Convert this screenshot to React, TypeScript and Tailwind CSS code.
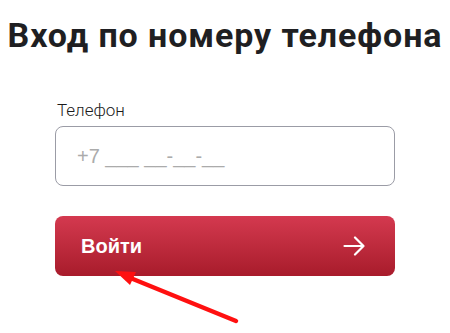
import React from 'react';

export default function App() {
  return (
    <div className="relative w-[450px] h-[333px] bg-white overflow-hidden">
      <h1 className="pt-[18px] text-center text-[34px] leading-[34px] tracking-[0.9px] font-bold text-[#1f1f22] font-['Roboto',sans-serif] whitespace-nowrap">
        Вход по номеру телефона
      </h1>

      <form className="mx-[55px] mt-[48px] flex flex-col" onSubmit={(e) => e.preventDefault()}>
        <label
          htmlFor="phone"
          className="pl-[2px] text-[17px] leading-[20px] font-light text-[#1a1a1a] font-['Roboto',sans-serif]"
        >
          Телефон
        </label>
        <input
          id="phone"
          type="tel"
          placeholder="+7 ___ __-__-__"
          className="mt-[6px] h-[60px] w-full rounded-[8px] border border-[#9b9ca6] pl-[21px] text-[20px] text-[#333] placeholder:text-[#ababab] font-['Liberation_Sans',Arial,sans-serif] outline-none"
        />
        <button
          type="submit"
          className="mt-[30px] h-[60px] w-full rounded-[8px] bg-gradient-to-b from-[#d4394f] to-[#a81b2b] pl-[26px] pr-[30px] flex items-center justify-between text-white text-[20px] font-bold font-['Liberation_Sans',Arial,sans-serif]"
        >
          <span>Войти</span>
          <svg width="22" height="20" viewBox="0 0 22 20" fill="none" stroke="white" strokeWidth="2.2" strokeLinecap="round" strokeLinejoin="round">
            <path d="M1.5 10h19M12 1.5l8.5 8.5-8.5 8.5" />
          </svg>
        </button>
      </form>

      {/* annotation arrow */}
      <svg className="absolute left-0 top-0 pointer-events-none" width="450" height="333" viewBox="0 0 450 333">
        <line x1="236" y1="321" x2="128" y2="277" stroke="#ff1010" strokeWidth="4.5" strokeLinecap="round" />
        <polygon points="115,271 136,272 130,285" fill="#ff1010" />
      </svg>
    </div>
  );
}
